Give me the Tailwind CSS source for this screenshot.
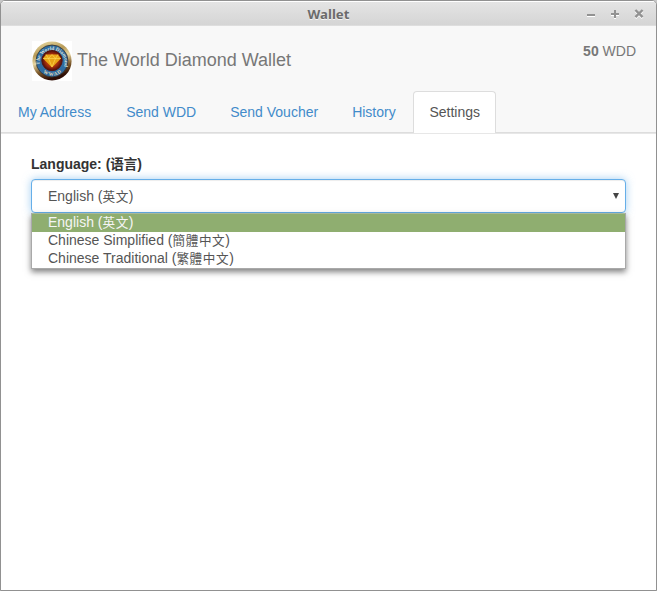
<!DOCTYPE html>
<html lang="en">
<head>
<meta charset="utf-8">
<title>Wallet</title>
<script src="https://cdn.jsdelivr.net/npm/@tailwindcss/browser@4"></script>
</head>
<body class="h-[591px] w-[657px] overflow-hidden bg-[#c8c8c8] font-['Liberation_Sans','Noto_Sans_CJK_SC',sans-serif] text-[14px] leading-5 text-[#555]">
<div class="flex h-full flex-col overflow-hidden rounded-t-[5px] border border-[#919191] bg-white">
  <div class="relative flex h-[25px] shrink-0 items-center justify-center border-t border-b border-t-white border-b-[#dedede] bg-linear-to-b from-[#e4e4e4] to-[#d5d5d5]">
    <span class="pt-px font-['Noto_Sans',sans-serif] text-[13.2px] leading-[25px] font-bold text-[#6b6b6b] [text-shadow:0_1px_0_#f4f4f4]">Wallet</span>
    <div class="absolute top-[6px] right-[11px] flex gap-3">
      <svg class="h-3 w-3 drop-shadow-[0_1px_0_#fff]" viewBox="0 0 12 12" fill="none" stroke="#929292" stroke-width="2"><path d="M2 7h8"/></svg>
      <svg class="h-3 w-3 drop-shadow-[0_1px_0_#fff]" viewBox="0 0 12 12" fill="none" stroke="#929292" stroke-width="2"><path d="M2 6h8M6 2v8"/></svg>
      <svg class="h-3 w-3 drop-shadow-[0_1px_0_#fff]" viewBox="0 0 12 12" fill="none" stroke="#929292" stroke-width="2.4"><path d="M2.4 2l7.2 7.2M9.6 2L2.4 9.2"/></svg>
    </div>
  </div>
  <header class="flex h-[108px] shrink-0 flex-col justify-between border-b border-[#e7e7e7] bg-[#f8f8f8]">
    <div class="flex items-start justify-between pt-[15px] pr-5 pl-[31px] text-[#777]">
      <div class="flex items-center gap-[5px]">
        <svg class="h-10 w-10" viewBox="0 0 40 40">
          <defs>
            <linearGradient id="rim" x1="0" y1="0" x2="0.3" y2="1"><stop offset="0" stop-color="#f1e5b0"/><stop offset=".35" stop-color="#b79a57"/><stop offset=".55" stop-color="#e8d6a0"/><stop offset=".78" stop-color="#7d5a2b"/><stop offset="1" stop-color="#2e0d05"/></linearGradient>
            <radialGradient id="core"><stop offset="0" stop-color="#d9670f"/><stop offset=".65" stop-color="#a12b0c"/><stop offset="1" stop-color="#4a0d0c"/></radialGradient>
            <path id="arc" d="M8 25.5A12.6 12.6 0 1 1 32 25.5"/>
            <path id="base" d="M8 29Q20 40.5 32 29"/>
          </defs>
          <path fill="#fff" d="M0 0h40v40H0z"/>
          <circle cx="20" cy="20" r="19.6" fill="url(#rim)"/>
          <circle cx="20" cy="20" r="16" fill="#2f6ca1" stroke="#33302c" stroke-width=".8"/>
          <circle cx="20" cy="19.5" r="10.2" fill="url(#core)" stroke="#561410"/>
          <g fill="#dce0d8" font-family="Liberation Serif, serif" font-weight="bold">
            <text font-size="5.2"><textPath href="#arc" startOffset="2" textLength="45">The World Diamond</textPath></text>
            <text font-size="5" fill="#e2d7b4"><textPath href="#base" startOffset="4" textLength="20">W W A D</textPath></text>
          </g>
          <path d="M14 13.5h12l3 4L20 26.500 11 17.500z" fill="#e9a516"/>
          <path d="M11 17.500h18M14 13.500l2.500 4L20 26l3.500-8.500 2.500-4M16.500 17.500l3.500-4 3.500 4" fill="none" stroke="#ffdf5c" stroke-width=".6"/>
        </svg>
        <span class="text-[18px] leading-5 -translate-y-px">The World Diamond Wallet</span>
      </div>
      <div><b>50</b> WDD</div>
    </div>
    <nav class="flex h-[42px] border-b border-[#ddd] pl-px text-[#428bca]">
      <a class="mr-0.5 pt-[11px] pr-[17px] pl-4">My Address</a>
      <a class="mr-0.5 px-4 pt-[11px]">Send WDD</a>
      <a class="mr-0.5 px-4 pt-[11px]">Send Voucher</a>
      <a class="mr-0.5 pt-[11px] pr-[15px] pl-4">History</a>
      <a class="-mb-px h-[42px] w-[83px] rounded-t border border-b-0 border-[#ddd] bg-white pt-[10px] pl-px text-center text-[#555]">Settings</a>
    </nav>
  </header>
  <main class="px-[30px] pt-5">
    <label class="mb-[5px] block h-5 font-bold text-[#333]">Language: (<span class="text-[13.5px]">语言</span>)</label>
    <div class="relative flex h-[34px] items-center justify-between rounded border border-[#66afe9] bg-white pr-[6px] pl-4 shadow-[inset_0_1px_1px_rgba(0,0,0,0.075),0_0_8px_rgba(102,175,233,0.6)]">
      <span>English (<span class="text-[12.6px] tracking-[0.6px]">英文</span>)</span>
      <svg class="h-[6px] w-[6px]" viewBox="0 0 6 6"><path d="M0 0h6L3 6z" fill="#444"/></svg>
      <ul class="absolute top-[33px] -right-px -left-px h-[56px] border border-t-0 border-[#a9a9a9] bg-white leading-[18px] shadow-[0_3px_6px_rgba(0,0,0,0.5)]">
        <li class="h-[19px] border-t border-[#a9b89a] bg-[#8fae70] pl-4 leading-4 text-[#f5f5f5]">English (<span class="text-[12.6px] tracking-[0.6px]">英文</span>)</li>
        <li class="-mt-px h-[18px] pt-px pl-4 leading-4">Chinese Simplified (<span class="font-['Noto_Sans_CJK_TC',sans-serif] text-[12.6px] tracking-[0.6px]">簡體中文</span>)</li>
        <li class="h-[18px] pt-px pl-4 leading-4">Chinese Traditional (<span class="font-['Noto_Sans_CJK_TC',sans-serif] text-[12.6px] tracking-[0.6px]">繁體中文</span>)</li>
      </ul>
    </div>
  </main>
</div>
</body>
</html>
